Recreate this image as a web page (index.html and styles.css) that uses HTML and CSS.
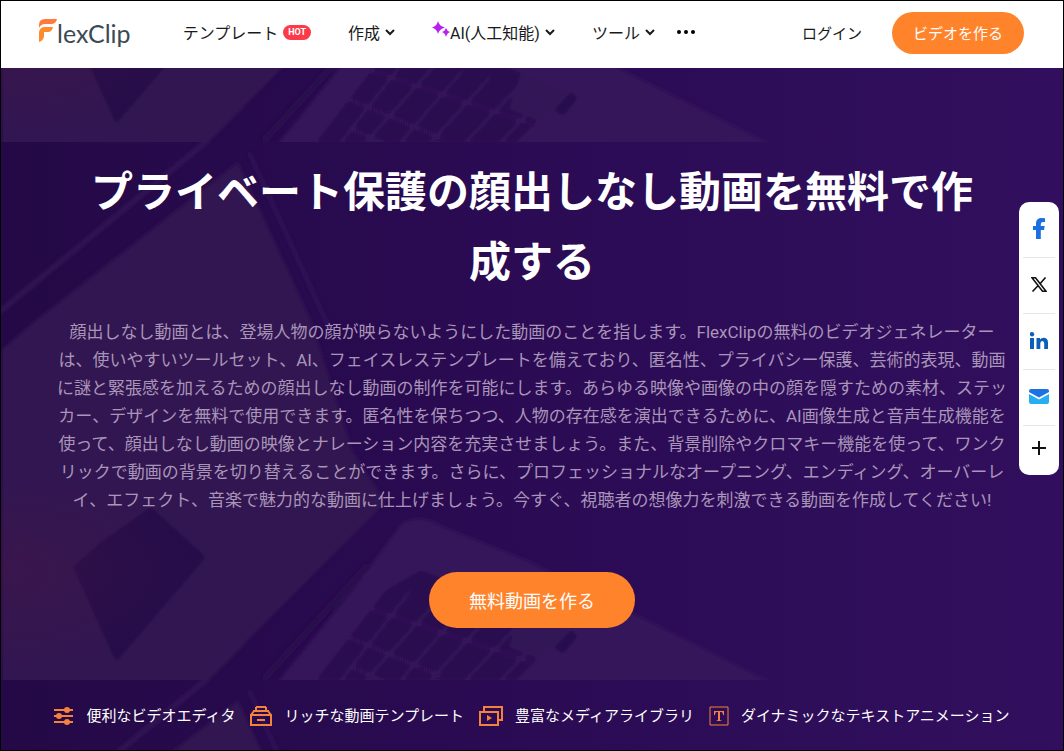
FILE: index.html
```html
<!DOCTYPE html>
<html lang="ja">
<head>
    <meta charset="UTF-8">
    <meta name="viewport" content="width=device-width, initial-scale=1.0">
    <title>顔出しなし動画を無料で作成 - FlexClip</title>
    <link rel="stylesheet" href="styles.css">
</head>
<body>
    <header class="header">
        <a class="logo" href="#" aria-label="FlexClip">
            <svg class="logo-mark" width="18" height="24" viewBox="0 0 18 24" aria-hidden="true">
                <path d="M0 9V6Q0 0 6 0H18Q17 5 12 5H6Q2 5 0 9Z" fill="#ff7a3c"/>
                <path d="M0 23V13Q1 8 6 8H14Q13 13 9 13H5V17Q5 21 0 23Z" fill="#ff8a2c"/>
            </svg>
            <span class="logo-text">lexClip</span>
        </a>
        <nav class="nav">
            <a class="nav-link" href="#">テンプレート<span class="hot">HOT</span></a>
            <a class="nav-link" href="#">作成<svg class="chevron" viewBox="0 0 10 7"><path d="M1 1l4 4 4-4"/></svg></a>
            <a class="nav-link" href="#"><svg class="sparkle" viewBox="0 0 18 16"><path d="M6 0Q7 5 13 6.500Q7 8 6 13Q5 8 0 6.500Q5 5 6 0Z"/><path d="M14 7Q15 10 18 11Q15 12 14 16Q13 12 10 11Q13 10 14 7Z"/></svg>AI(人工知能)<svg class="chevron" viewBox="0 0 10 7"><path d="M1 1l4 4 4-4"/></svg></a>
            <a class="nav-link" href="#">ツール<svg class="chevron" viewBox="0 0 10 7"><path d="M1 1l4 4 4-4"/></svg></a>
            <button class="more" type="button" aria-label="その他"><svg width="18" height="4" viewBox="0 0 18 4"><circle cx="2" cy="2" r="2"/><circle cx="9" cy="2" r="2"/><circle cx="16" cy="2" r="2"/></svg></button>
        </nav>
        <div class="account">
            <a class="login" href="#">ログイン</a>
            <button class="btn btn-small" type="button">ビデオを作る</button>
        </div>
    </header>

    <main class="hero">
        <svg class="hero-bg" width="100%" height="100%" aria-hidden="true">
            <defs>
                <linearGradient id="base" x1="0" y1="0" x2="1" y2="0">
                    <stop offset="0" stop-color="#240946"/>
                    <stop offset="0.5" stop-color="#2b0b54"/>
                    <stop offset="1" stop-color="#310f5e"/>
                </linearGradient>
                <radialGradient id="warm" cx="0" cy="0.8" r="0.18">
                    <stop offset="0" stop-color="#451545" stop-opacity="0.4"/>
                    <stop offset="1" stop-color="#451545" stop-opacity="0"/>
                </radialGradient>
                <filter id="soft"><feGaussianBlur stdDeviation="2"/></filter>
                <pattern id="laptops" y="74" width="1064" height="538" patternUnits="userSpaceOnUse">
                    <rect width="1064" height="538" fill="url(#base)"/>
                    <g filter="url(#soft)">
                        <!-- screen of the left laptop -->
                        <path d="M237 20L35 178L0 208V548H198L385 360L352 310L310 178Z" fill="#311751"/>
                        <path d="M212 -6L-4 172" stroke="#3a1c5c" stroke-width="3" fill="none"/>
                        <path d="M248 10L330 190" stroke="#30135a" stroke-width="3" fill="none"/>
                        <path d="M150 365L205 415L115 520L72 425L100 400Z" fill="#280d49"/>
                        <!-- keyboard half -->
                        <path d="M400 382Q420 370 440 384L530 420L785 548H270L350 450Z" fill="#34175a"/>
                        <path d="M368 422L262 538" stroke="#290b4d" stroke-width="7" fill="none"/>
                        <path d="M385 448L420 428L500 460L565 490L515 538H315Z" fill="#2b0d50"/>
                        <path d="M365 465L530 520M340 492L440 534M350 525L385 540M410 448L340 538M437 458L365 538M462 466L400 538M490 472L430 538M522 478L465 538M545 490L500 538" stroke="#34175a" stroke-width="3" fill="none"/>
                        <path d="M520 468L565 486L545 520L508 505Z" fill="#34175a" opacity="0.7"/>
                        <path d="M570 488L577 494L562 512L553 506Z" fill="#280b4d"/>
                    </g>
                    <rect width="1064" height="538" fill="url(#warm)"/>
                </pattern>
            </defs>
            <rect width="100%" height="100%" fill="url(#laptops)"/>
        </svg>

        <div class="hero-content">
            <h1>プライベート保護の顔出しなし動画を無料で作成する</h1>
            <p class="intro">顔出しなし動画とは、登場人物の顔が映らないようにした動画のことを指します。FlexClipの無料のビデオジェネレーターは、使いやすいツールセット、AI、フェイスレステンプレートを備えており、匿名性、プライバシー保護、芸術的表現、動画に謎と緊張感を加えるための顔出しなし動画の制作を可能にします。あらゆる映像や画像の中の顔を隠すための素材、ステッカー、デザインを無料で使用できます。匿名性を保ちつつ、人物の存在感を演出できるために、AI画像生成と音声生成機能を使って、顔出しなし動画の映像とナレーション内容を充実させましょう。また、背景削除やクロマキー機能を使って、ワンクリックで動画の背景を切り替えることができます。さらに、プロフェッショナルなオープニング、エンディング、オーバーレイ、エフェクト、音楽で魅力的な動画に仕上げましょう。今すぐ、視聴者の想像力を刺激できる動画を作成してください!</p>
            <button class="btn btn-large" type="button">無料動画を作る</button>
        </div>

        <ul class="features">
            <li>
                <svg width="20" height="20" viewBox="0 0 20 20"><path d="M0 4h19M0 10h19M0 16h19"/><g class="solid"><circle cx="13" cy="4" r="3"/><circle cx="5" cy="10" r="3"/><circle cx="13" cy="16" r="3"/></g></svg>
                便利なビデオエディタ
            </li>
            <li>
                <svg width="22" height="20" viewBox="0 0 22 20"><path d="M6 1h10M3 5h16M1 9h20v10H1zM7 14h8M4 5L1 9M18 5l3 4M6 1v4M16 1v4"/></svg>
                リッチな動画テンプレート
            </li>
            <li>
                <svg width="24" height="20" viewBox="0 0 24 20"><path d="M1 6h18v13H1zM5 5V1h18v13h-3"/><path class="solid" d="M8 9l5 3-5 3z"/></svg>
                豊富なメディアライブラリ
            </li>
            <li>
                <svg width="20" height="20" viewBox="0 0 20 20"><path class="thin" d="M1 1h18v18H1z"/><path class="solid" d="M5 5h10v4h-1q0-3-2-3h-1v8l2 1H7l2-1V6H8Q6 6 6 9H5z"/></svg>
                ダイナミックなテキストアニメーション
            </li>
        </ul>
    </main>

    <aside class="share">
        <a href="#" aria-label="Facebook"><svg width="12" height="21" viewBox="0 0 12 21"><path fill="#1b6fe0" d="M3 21V12H0V8H3V5.500Q3 0 8.500 0L12 .3V4H10Q7.800 4 7.800 6.200V8H11.700L11 12H7.800V21Z"/></svg></a>
        <a href="#" aria-label="X"><svg width="16" height="15" viewBox="0 0 16 15"><path fill="none" stroke="#111" stroke-width="1.600" d="M1 .8H4.500L15 14.200H11.500ZM14.500 .5L9 6.700M7 8.700L1.500 14.500"/></svg></a>
        <a href="#" aria-label="LinkedIn"><svg width="18" height="17" viewBox="0 0 18 17"><path fill="#0a5fb8" d="M0 6H4V17H0ZM6.500 6H10V7.500Q11.300 5.700 13.500 5.700Q18 5.700 18 10.800V17H14.200V11.500Q14.200 9 12.300 9Q10.300 9 10.300 11.500V17H6.500Z"/><circle cx="2" cy="2.200" r="2.200" fill="#0a5fb8"/></svg></a>
        <a href="#" aria-label="メール"><svg width="20" height="15" viewBox="0 0 20 15"><path fill="#1f6fe5" d="M2 0H18Q20 0 20 2V3L10 8.500L0 3V2Q0 0 2 0Z"/><path fill="#27aef0" d="M0 5L10 10.500L20 5V13Q20 15 18 15H2Q0 15 0 13Z"/></svg></a>
        <a href="#" aria-label="もっと見る"><svg width="14" height="14" viewBox="0 0 14 14"><path stroke="#111" stroke-width="2" d="M7 0V14M0 7H14"/></svg></a>
    </aside>
</body>
</html>
```

FILE: styles.css
```css
* {
    box-sizing: border-box;
}
body {
    margin: 0;
    min-height: 100vh;
    display: flex;
    flex-direction: column;
    border: 1px solid #000;
    background: #fff;
    color: #1a1a1a;
    font-family: Roboto, "Noto Sans CJK JP", sans-serif;
}
a {
    color: inherit;
    text-decoration: none;
}
button {
    font-family: inherit;
    border: none;
    cursor: pointer;
}

/* Header */
.header {
    display: flex;
    align-items: center;
    height: 67px;
    padding: 0 39px 3px 38px;
}
.logo {
    display: flex;
    align-items: center;
    margin-right: 52px;
}
.logo-mark {
    margin-bottom: 4px;
}
.logo-text {
    color: #3b4a54;
    font-family: Lato, sans-serif;
    font-size: 25px;
    line-height: 32px;
}
.nav {
    display: flex;
    align-items: center;
    gap: 37px;
    padding-bottom: 2px;
    font-size: 16px;
}
.nav-link {
    display: flex;
    align-items: center;
    white-space: nowrap;
}
.hot {
    margin-left: 5px;
    padding: 0 5px;
    border-radius: 8px;
    background: #fb3a4a;
    color: #fff;
    font-size: 9px;
    font-weight: bold;
    line-height: 15px;
}
.chevron {
    width: 10px;
    height: 7px;
    margin-left: 5px;
    fill: none;
    stroke: #1a1a1a;
    stroke-width: 2;
}
.sparkle {
    width: 18px;
    height: 16px;
    margin-bottom: 6px;
    fill: #b81ff0;
}
.more {
    display: flex;
    margin-left: -15px;
    padding: 0;
    background: none;
}
.account {
    display: flex;
    align-items: center;
    gap: 30px;
    margin-left: auto;
    font-size: 15px;
}
.login {
    padding-bottom: 2px;
}

/* Buttons */
.btn {
    border-radius: 28px;
    background: #ff832b;
    color: #fff;
}
.btn-small {
    height: 42px;
    padding: 0 21px 2px;
    font-size: 15px;
}
.btn-large {
    height: 56px;
    padding: 0 40px;
    font-size: 18px;
}

/* Hero */
.hero {
    position: relative;
    flex: 1;
    display: flex;
    flex-direction: column;
    background: #2a0b53;
    color: #fff;
}
.hero-bg {
    position: absolute;
    inset: 0;
}
.hero-content {
    position: relative;
    padding: 90px 51px 56px;
    text-align: center;
}
h1 {
    max-width: 900px;
    margin: 0 auto 20px;
    font-size: 42px;
    line-height: 70px;
}
.intro {
    max-width: 954px;
    margin: 0 auto 58px;
    color: #a995b8;
    font-size: 17px;
    line-height: 28px;
}
.features {
    position: relative;
    display: flex;
    justify-content: center;
    gap: 15px;
    margin: 20px 0;
    padding: 0;
    list-style: none;
    font-size: 15px;
    line-height: 24px;
    white-space: nowrap;
}
.features li {
    display: flex;
    align-items: center;
    gap: 12px;
}
.features svg {
    fill: none;
    stroke: #f5823c;
    stroke-width: 2;
}
.features .thin {
    stroke-width: 1;
}
.features .solid {
    fill: #f5823c;
    stroke: none;
}

/* Share bar */
.share {
    position: fixed;
    top: 202px;
    right: 5px;
    width: 40px;
    padding: 0 4px 3px;
    border-radius: 10px;
    background: #fff;
}
.share a {
    display: flex;
    align-items: center;
    justify-content: center;
    height: 56px;
    padding-bottom: 2px;
    border-bottom: 1px solid #e6e6e6;
}
.share a:last-child {
    height: 46px;
    border-bottom: none;
}
```
